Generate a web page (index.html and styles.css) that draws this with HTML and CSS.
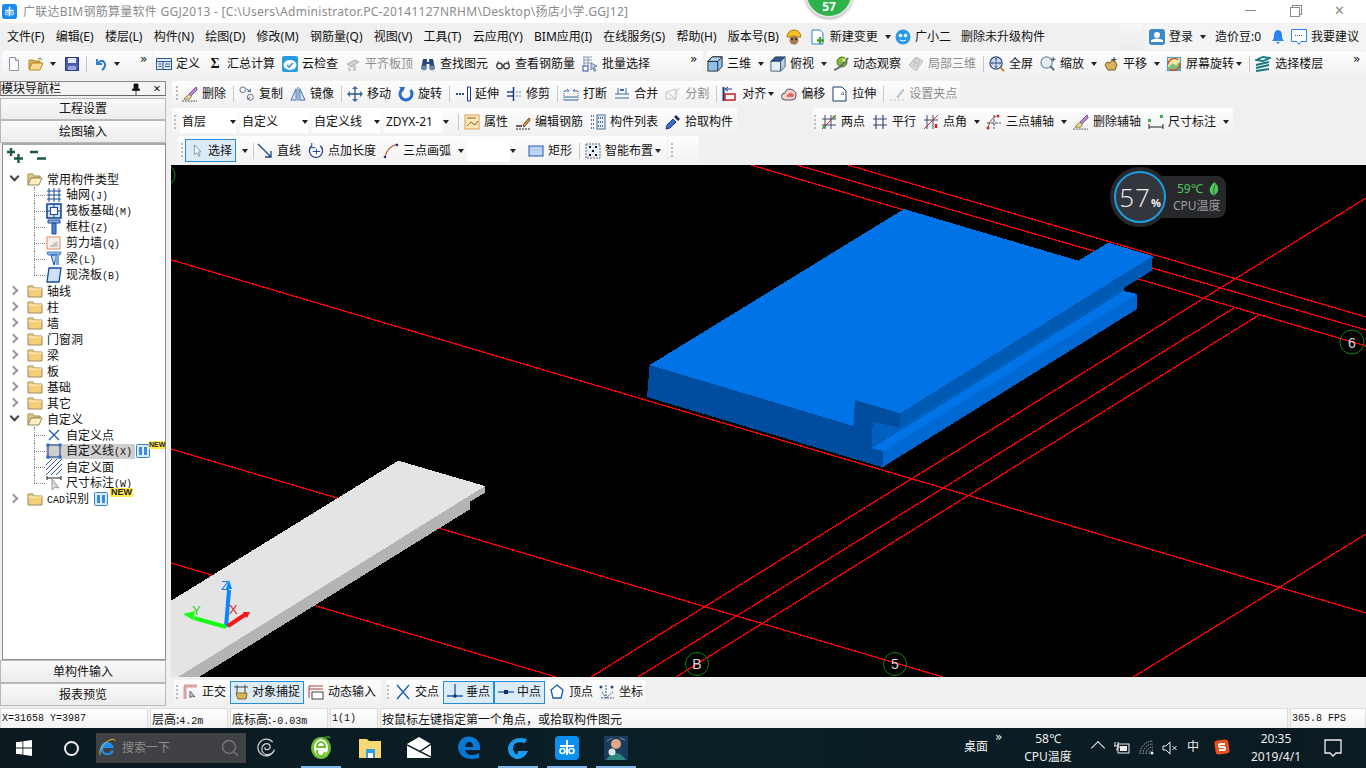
FILE: index.html
```html
<!DOCTYPE html>
<html lang="zh">
<head>
<meta charset="utf-8">
<title>广联达BIM钢筋算量软件 GGJ2013</title>
<link rel="stylesheet" href="styles.css">
</head>
<body>
<svg class="defs" xmlns="http://www.w3.org/2000/svg">
<symbol id="app" viewBox="0 0 16 16"><rect x="0" y="0" width="16" height="16" rx="3" fill="#1a8cf0"/><path d="M8 3v10M3.5 7h9" stroke="#fff" stroke-width="1.6" fill="none"/><circle cx="5" cy="10" r="1.6" fill="none" stroke="#fff"/><circle cx="11" cy="10" r="1.6" fill="none" stroke="#fff"/></symbol>
<symbol id="new" viewBox="0 0 16 16"><path d="M3.5 1.5h6l3 3v10h-9z" fill="#fdfdfd" stroke="#8a94a6"/><path d="M9.5 1.5v3h3" fill="#dfe6f0" stroke="#8a94a6"/></symbol>
<symbol id="open" viewBox="0 0 16 16"><path d="M1 4h5l1 1h5v2H4L1 13z" fill="#e0b050" stroke="#b58a30"/><path d="M4 7h11l-3 7H1z" fill="#f6d98a" stroke="#b58a30"/><path d="M10 3q3-2 4 1" stroke="#3a8a30" fill="none"/></symbol>
<symbol id="save" viewBox="0 0 16 16"><rect x="1.5" y="1.5" width="13" height="13" fill="#4a5fb4" stroke="#2c3a80"/><rect x="4" y="2" width="8" height="5" fill="#e8ecf6"/><rect x="4" y="10" width="8" height="4" fill="#9aa6d4"/></symbol>
<symbol id="undo" viewBox="0 0 16 16"><path d="M4 3v5h5" fill="none" stroke="#2a7ad0" stroke-width="1.8"/><path d="M4 8q4-5 7-2 3 4-2 8" fill="none" stroke="#2a7ad0" stroke-width="2"/></symbol>
<symbol id="def" viewBox="0 0 16 16"><rect x="0.5" y="2.5" width="15" height="11" fill="#dfe9f5" stroke="#2a5a90"/><path d="M1 5.5h14M7 5.5v8M9 8h5M9 10.5h5M2.5 8h3M2.5 10.5h3" stroke="#2a5a90" fill="none"/></symbol>
<symbol id="cloud" viewBox="0 0 16 16"><rect x="0" y="0" width="16" height="16" rx="2" fill="#2a9be0"/><ellipse cx="8" cy="9" rx="6.5" ry="5" fill="#fff"/><path d="M5 9l2 2 4-4" stroke="#2a9be0" stroke-width="1.6" fill="none"/></symbol>
<symbol id="flat" viewBox="0 0 16 16"><path d="M2 8l8-4 4 2-8 5z" fill="#d0d0d0" stroke="#b0b0b0"/><path d="M3 11l3 2v2H3zM8 10h3v5H8z" fill="#c8c8c8"/></symbol>
<symbol id="binoc" viewBox="0 0 16 16"><path d="M3 3h4v3h2V3h4l2 10H9.5V8h-3v5H1z" fill="#2a4a78"/><circle cx="4" cy="12" r="2.5" fill="#6a8ab0"/><circle cx="12" cy="12" r="2.5" fill="#6a8ab0"/></symbol>
<symbol id="glasses" viewBox="0 0 16 16"><circle cx="4.5" cy="10" r="2.8" fill="#fff" stroke="#444" stroke-width="1.4"/><circle cx="11.5" cy="10" r="2.8" fill="#fff" stroke="#444" stroke-width="1.4"/><path d="M7 10h2M2 8l2-3M14 8l-1-3" stroke="#444" fill="none"/></symbol>
<symbol id="batch" viewBox="0 0 16 16"><path d="M1 1h9M1 4h9M1 7h9M2 1v9M6 1v9" stroke="#8a9ab0" fill="none"/><rect x="1" y="10" width="5" height="5" fill="#fff" stroke="#2a4ab0"/><path d="M9 7l6 3-3 1 2 4-2 0-1-3-2 2z" fill="#bcd" stroke="#68a"/></symbol>
<symbol id="cube" viewBox="0 0 18 18"><path d="M1 6l5-5h11v11l-5 5H1z" fill="#8cc0ec" stroke="#222"/><path d="M1 6h11v11M12 6l5-5" fill="none" stroke="#222"/><path d="M1 6l5-5h11l-5 5z" fill="#b5d8f5" stroke="#222"/></symbol>
<symbol id="top" viewBox="0 0 18 18"><path d="M1 6l5-5h11l-5 5z" fill="#2a5a90" stroke="#234"/><path d="M1 6h11v11H1z" fill="#e4eef8" stroke="#456"/><path d="M12 6l5-5v11l-5 5z" fill="#bcd3ec" stroke="#456"/></symbol>
<symbol id="orbit" viewBox="0 0 16 16"><circle cx="9" cy="6" r="5" fill="#8ab83a" stroke="#4a7a20"/><path d="M1 14Q8 12 15 2" stroke="#5a6a7a" stroke-width="2" fill="none"/><circle cx="11" cy="4" r="1.8" fill="#d8ee88"/></symbol>
<symbol id="lcube" viewBox="0 0 16 16"><path d="M8 1l7 4-7 10-7-6z" fill="#d8d8d8" stroke="#bdbdbd"/><path d="M4 4l7 5M8 1l-2 10M12 3l-3 9" stroke="#c0c0c0" fill="none"/></symbol>
<symbol id="full" viewBox="0 0 17 17"><circle cx="7.5" cy="7.5" r="6.5" fill="#d8e4f2" stroke="#2a4a70" stroke-width="1.3"/><path d="M7.5 3v9M3 7.5h9" stroke="#2a4a90"/><path d="M6 4l1.5-1.5L9 4M6 11l1.5 1.5L9 11M4 6L2.5 7.5 4 9M11 6l1.5 1.5L11 9" stroke="#2a4a90" fill="none"/><path d="M12 12l4 4" stroke="#c08020" stroke-width="2"/></symbol>
<symbol id="zoom" viewBox="0 0 17 17"><circle cx="7" cy="7" r="6" fill="#e4ecf6" stroke="#7a8a9a" stroke-width="1.3"/><path d="M11 11l4 4" stroke="#4a6a8a" stroke-width="2.2"/><path d="M14 1v5M11.5 3.5h5" stroke="#2a4a4a"/></symbol>
<symbol id="pan" viewBox="0 0 16 16"><path d="M2 9l2-3 3 1 2-3 3 1 2 4-2 5H5z" fill="#d8b460" stroke="#7a5a20"/><path d="M11 1v5M8.5 3.5h5" stroke="#345"/></symbol>
<symbol id="screen" viewBox="0 0 17 17"><rect x="1.5" y="1.5" width="14" height="14" fill="#f4e8a0" stroke="#3a9ac8"/><path d="M2 12l5-4 4 2 4-5v10H2z" fill="#7ac078"/><path d="M2 9a7 7 0 0 1 11-5M15 8a7 7 0 0 1-11 6" stroke="#d83020" stroke-width="1.3" fill="none"/></symbol>
<symbol id="floors" viewBox="0 0 16 16"><path d="M1 4l7-3 7 1-7 3zM1 9l13-3M1 12l13-3M1 15l13-2" stroke="#1a7a80" stroke-width="1.8" fill="none"/></symbol>
<symbol id="del" viewBox="0 0 17 17"><path d="M15 1L7 9l2 2 7-7z" fill="#c08ad0" stroke="#6a4a8a"/><path d="M7 9L2 14h6l2-3z" fill="#f0d8a0" stroke="#8a7a40"/><path d="M0 16h16" stroke="#444" stroke-dasharray="2 1"/></symbol>
<symbol id="copy" viewBox="0 0 17 17"><circle cx="4" cy="4" r="3" fill="none" stroke="#667"/><circle cx="12" cy="12" r="3.2" fill="none" stroke="#667"/><path d="M12 12l-3 2M8 3l4 3M12 3v3H9" stroke="#2a5a90" fill="none"/></symbol>
<symbol id="mirror" viewBox="0 0 17 17"><path d="M8.5 1v15" stroke="#3a6ab0"/><path d="M6.5 3v12H1zM10.5 3v12H16z" fill="#d8e6f6" stroke="#3a6ab0"/></symbol>
<symbol id="move" viewBox="0 0 16 16"><path d="M8 1v14M1 8h14" stroke="#2a5a8a" stroke-width="1.3"/><path d="M8 0l3 3H5zM8 16l3-3H5zM0 8l3-3v6zM16 8l-3-3v6z" fill="#3a6aa0"/></symbol>
<symbol id="rot" viewBox="0 0 16 16"><path d="M12.5 4A6 6 0 1 1 4 3.5" fill="none" stroke="#2a6ac8" stroke-width="3"/><path d="M1 1l6 0-2 5z" fill="#2a6ac8"/></symbol>
<symbol id="ext" viewBox="0 0 16 16"><path d="M1 8h9" stroke="#2a4a8a" stroke-width="2" stroke-dasharray="2 1"/><path d="M12.5 1h3v14h-3z" fill="#fff" stroke="#1a3a8a"/></symbol>
<symbol id="trim" viewBox="0 0 16 16"><path d="M1 6h6M1 10h6" stroke="#2a4a8a" stroke-width="1.5"/><path d="M7.5 1v14" stroke="#1a3a6a" stroke-width="1.5"/><path d="M10 6h5M10 10h5" stroke="#8aa8d0" stroke-width="1.5" stroke-dasharray="2 1"/></symbol>
<symbol id="brk" viewBox="0 0 16 16"><path d="M1 5h5L4 3M15 5h-5l2-2M1 11h14M1 14h14" stroke="#3a6aa8" fill="none"/><path d="M1 5v9M15 5v9" stroke="#3a6aa8" stroke-dasharray="1 1"/></symbol>
<symbol id="mrg" viewBox="0 0 16 16"><path d="M4 2v6M12 2v6M1 8h14M1 12h14" stroke="#3a6aa8" fill="none"/><path d="M6 4h4" stroke="#3a6aa8" stroke-width="2"/></symbol>
<symbol id="split" viewBox="0 0 16 16"><path d="M1 13V6l10-3v10zM1 6l10 7M14 2l-4 6" stroke="#c4c4c4" fill="none"/></symbol>
<symbol id="alg" viewBox="0 0 16 16"><path d="M1.5 1v14" stroke="#1a3a8a" stroke-width="2"/><path d="M3 3h7M6 1L3 3l3 2" stroke="#1a3a8a" fill="none"/><rect x="3" y="8" width="10" height="6" fill="#fff" stroke="#c02020" stroke-width="1.5"/></symbol>
<symbol id="off" viewBox="0 0 16 16"><path d="M4 14a3 3 0 0 1 0-7q1-6 8-3 4 2 3 6 0 4-4 4z" fill="#f0d0d0" stroke="#555"/><path d="M6 11q-1-3 2-3 1-3 4 0 2 1 0 3z" fill="#e06a5a"/></symbol>
<symbol id="str" viewBox="0 0 16 16"><path d="M1 1h9l4 4v10H1z" fill="#fff" stroke="#1a3a6a"/><path d="M9 8h4M11 6v4" stroke="#1a3a6a" stroke-dasharray="1 1"/></symbol>
<symbol id="grip2" viewBox="0 0 16 16"><path d="M8 11l6-8 1 1-6 8z" fill="#ddd" stroke="#bbb"/><path d="M1 14h14" stroke="#bbb" stroke-dasharray="2 2"/></symbol>
<symbol id="prop" viewBox="0 0 16 16"><rect x="1" y="1" width="14" height="14" fill="#fde6b8" stroke="#d8a050"/><path d="M3 4h9M3 12l4-4 4 3 3-4" stroke="#8a6020" fill="none"/></symbol>
<symbol id="edit" viewBox="0 0 16 16"><path d="M1 12h6" stroke="#222" stroke-width="1.4"/><path d="M8 11L14 4l1 2-6 7z" fill="#d8a040" stroke="#6a4a10"/><path d="M1 15h14" stroke="#222" stroke-dasharray="2 1"/></symbol>
<symbol id="list" viewBox="0 0 16 16"><rect x="7" y="1" width="8" height="14" fill="#e4eef8" stroke="#4a6a90"/><path d="M8 4h6M8 8h6M8 12h6M1 2h3M1 6h3M1 10h3M1 14h3" stroke="#2a4a70" stroke-dasharray="1 1" stroke-width="1.4"/></symbol>
<symbol id="pick" viewBox="0 0 16 16"><path d="M1 15l1-4 6-6 3 3-6 6z" fill="#3a6ad0" stroke="#1a3a80"/><path d="M9 3l2-2 4 4-2 2z" fill="#1a2a50"/></symbol>
<symbol id="two" viewBox="0 0 16 16"><path d="M4 1v14M10 1v14M1 5h14M1 11h14" stroke="#3a4a7a" fill="none"/><path d="M1 15L15 1" stroke="#d02020"/><circle cx="3" cy="13" r="1.5" fill="#3a9a30"/><circle cx="13" cy="3" r="1.5" fill="#3a9a30"/></symbol>
<symbol id="par" viewBox="0 0 16 16"><path d="M4 1v14M11 1v14M1 5h14M1 11h14" stroke="#3a4a7a" fill="none" stroke-width="1.2"/></symbol>
<symbol id="ang" viewBox="0 0 16 16"><path d="M4 1v14M10 1v14M1 6h14" stroke="#3a4a7a" fill="none"/><path d="M1 15L15 1" stroke="#d02020"/><path d="M13 10v4" stroke="#d02020" stroke-width="2.5"/></symbol>
<symbol id="arc3" viewBox="0 0 16 16"><path d="M2 15Q3 6 10 2" stroke="#c03020" fill="none"/><path d="M8 1v14M1 9h14" stroke="#3a4a7a" fill="none" stroke-dasharray="3 1"/><circle cx="2" cy="14" r="1.5" fill="#c03020"/><circle cx="12" cy="2" r="1.5" fill="#c03020"/></symbol>
<symbol id="dim" viewBox="0 0 16 16"><rect x="0" y="5" width="3" height="3" fill="#3ab04a"/><rect x="12" y="1" width="3" height="3" fill="#3ab04a"/><path d="M1 10v5M15 10v5M1 13h14" stroke="#222"/></symbol>
<symbol id="cur" viewBox="0 0 16 16"><path d="M5 1v11l3-2 2 4 1.5-1-2-4h3z" fill="#fff" stroke="#7a8aa0"/></symbol>
<symbol id="line" viewBox="0 0 16 16"><path d="M1 1l13 13M8 14h6V8" stroke="#1a4a7a" stroke-width="1.3" fill="none"/></symbol>
<symbol id="plen" viewBox="0 0 17 17"><path d="M4 3A7 7 0 1 0 13 3" fill="#fff" stroke="#1a3a8a" stroke-width="1.3"/><path d="M4 0v5h4M5 9h8M9 6v6" stroke="#1a3a8a" fill="none"/></symbol>
<symbol id="arc" viewBox="0 0 16 16"><path d="M2 15Q3 5 14 1" stroke="#c04030" stroke-width="1.2" fill="none"/><circle cx="2" cy="14" r="1.3" fill="#1a3a8a"/><circle cx="14" cy="2" r="1.3" fill="#1a3a8a"/></symbol>
<symbol id="rect" viewBox="0 0 16 16"><rect x="1" y="3" width="14" height="10" fill="#bcd2f4" stroke="#2a5ab0"/></symbol>
<symbol id="smart" viewBox="0 0 16 16"><rect x="1" y="1" width="14" height="14" fill="#e8eef6" stroke="#667" stroke-dasharray="2 1"/><path d="M4 4l2 0M10 4h2M4 12h2M10 12h2M8 7v2" stroke="#111" stroke-width="2"/></symbol>
<symbol id="ortho" viewBox="0 0 16 16"><path d="M2 2h13M3 2v13" stroke="#d8a0a0" stroke-width="3" fill="none"/><path d="M8 7v7l2-2 3 1z" fill="#ccd" stroke="#667"/></symbol>
<symbol id="snap" viewBox="0 0 16 16"><path d="M4 1v9M12 1v9M1 3h14" stroke="#444"/><path d="M3 9h11l-1 6H5z" fill="#d8b460" stroke="#8a6a20"/></symbol>
<symbol id="dyn" viewBox="0 0 16 16"><path d="M1 2h14M1 5h14M1 2v12" stroke="#b04040" fill="none"/><rect x="4" y="8" width="11" height="7" fill="#fff" stroke="#444"/></symbol>
<symbol id="cross" viewBox="0 0 16 16"><path d="M2 1l12 14M14 1L2 15" stroke="#1a5ab0" stroke-width="1.3"/></symbol>
<symbol id="perp" viewBox="0 0 16 16"><path d="M8 0v12M0 12h16" stroke="#1a5ab0" stroke-width="1.3"/><circle cx="8" cy="12" r="1.8" fill="#12306a"/></symbol>
<symbol id="mid" viewBox="0 0 16 16"><path d="M0 8h16" stroke="#1a5ab0" stroke-width="1.3"/><rect x="6" y="6" width="4" height="4" fill="#12306a"/></symbol>
<symbol id="vert" viewBox="0 0 16 16"><path d="M8 1l6 5-2 8H4L2 6z" fill="#fff" stroke="#1a5ab0" stroke-width="1.3"/></symbol>
<symbol id="coord" viewBox="0 0 16 16"><path d="M7 1v13M2 14h13M3 8l4 6 7-6" stroke="#2a4a8a" fill="none" stroke-dasharray="2 1"/><circle cx="13" cy="3" r="1.5" fill="#2a4a8a"/><circle cx="2" cy="3" r="1.5" fill="#2a4a8a"/></symbol>
<symbol id="plus" viewBox="0 0 16 16"><path d="M4 0v8M0 4h8M11.5 6v9M7 10.5h9" stroke="#1a5a4a" stroke-width="2.4"/></symbol>
<symbol id="minus" viewBox="0 0 16 16"><path d="M0 4h8M7 10.5h9" stroke="#1a5a4a" stroke-width="2.4"/></symbol>
<symbol id="pinp" viewBox="0 0 10 12"><path d="M3 1h4v5h1.500v1.500h-7V6H3zM5 7.500V12" fill="#111" stroke="#111" stroke-width=".8"/></symbol>
<symbol id="fold" viewBox="0 0 16 16"><path d="M1 3h5l1 2h8v9H1z" fill="#f4cf78" stroke="#9a8a60"/><path d="M1 6h14" stroke="#fff2c4"/></symbol>
<symbol id="foldo" viewBox="0 0 16 16"><path d="M1 3h5l1 2h6v2H4l-3 7z" fill="#e8c878" stroke="#9a8a60"/><path d="M4 7h11l-3 7H1z" fill="#fbeec0" stroke="#9a8a60"/></symbol>
<symbol id="tgrid" viewBox="0 0 16 16"><path d="M3 1v14M8 1v14M13 1v14M1 4h14M1 8h14M1 12h14" stroke="#1a4a9a"/></symbol>
<symbol id="traft" viewBox="0 0 16 16"><rect x="1" y="1" width="14" height="14" fill="#cfe0f4" stroke="#1a4a9a" stroke-width="1.6"/><rect x="4.5" y="4.5" width="7" height="7" fill="#fff" stroke="#1a4a9a"/><path d="M1 8h3M12 8h3M8 1v3M8 12v3" stroke="#1a4a9a"/></symbol>
<symbol id="tcol" viewBox="0 0 16 16"><path d="M2 1h12v3H2z" fill="#8ab4e4" stroke="#1a4a9a"/><path d="M6 4h4v11H6z" fill="#4a84d0" stroke="#1a4a9a"/></symbol>
<symbol id="twall" viewBox="0 0 16 16"><rect x="1" y="2" width="13" height="12" fill="#f4f0ea" stroke="#d89060"/><path d="M3 12l8-6 1 6z" fill="#c4c4c4"/></symbol>
<symbol id="tbeam" viewBox="0 0 16 16"><path d="M1 1h14l-1 3H2z" fill="#8ab4e4" stroke="#4a84d0"/><path d="M5 4h6l-3 10z" fill="#c4d8f0" stroke="#1a4a9a"/><path d="M9 5l4-2v11h-3z" fill="#7aa8e0"/></symbol>
<symbol id="tslab" viewBox="0 0 16 16"><path d="M3 1h12l-2 14H1z" fill="#cfe0f8" stroke="#1a4a9a" stroke-width="1.3"/></symbol>
<symbol id="tpt" viewBox="0 0 16 16"><path d="M3 3l10 10M13 3L3 13" stroke="#1a5ab0" stroke-width="1.3"/></symbol>
<symbol id="tline" viewBox="0 0 16 16"><rect x="2" y="2" width="12" height="12" fill="none" stroke="#1a3a7a"/><rect x="0.5" y="0.5" width="3" height="3" fill="#2a6ad0"/><rect x="12.5" y="0.5" width="3" height="3" fill="#2a6ad0"/><rect x="0.5" y="12.5" width="3" height="3" fill="#2a6ad0"/><rect x="12.5" y="12.5" width="3" height="3" fill="#2a6ad0"/></symbol>
<symbol id="thatch" viewBox="0 0 16 16"><path d="M0 6L6 0M0 11L11 0M0 16L16 0M5 16L16 5M10 16l6-6" stroke="#2a5ab0"/></symbol>
<symbol id="tdim" viewBox="0 0 16 16"><path d="M1 1v4M15 1v4M1 3h14" stroke="#222"/><path d="M6 4v11l3-3 4 1z" fill="#ddd" stroke="#999"/></symbol>
<symbol id="book" viewBox="0 0 14 14"><rect x="0.5" y="0.5" width="13" height="13" rx="1" fill="#d8ecff" stroke="#3a84c8"/><path d="M3 3h3v8H3zM8 3h3v8H8z" fill="#3a8ae0"/></symbol>
<symbol id="win" viewBox="0 0 16 16"><path d="M0 2.3l6.5-.9v6.2H0zM7.3 1.3L16 0v7.6H7.3zM0 8.4h6.5v6.2L0 13.7zM7.3 8.4H16V16l-8.7-1.2z" fill="#fff"/></symbol>
<symbol id="ie" viewBox="0 0 24 24"><path d="M4 13a8 8 0 0 1 16-1H8a4.5 4.5 0 0 0 9 3h3.5A8.5 8.5 0 0 1 4 13z" fill="#1c8ff0"/><path d="M4 20Q1 15 10 6q8-7 12-3" fill="none" stroke="#f0c020" stroke-width="1.2"/></symbol>
<symbol id="mag" viewBox="0 0 18 18"><circle cx="8" cy="8" r="6.5" fill="none" stroke="#777" stroke-width="1.4"/><path d="M13 13l4 4" stroke="#777" stroke-width="1.4"/></symbol>
<symbol id="swirl" viewBox="0 0 24 24"><path d="M20 5A10 10 0 1 0 22 14Q20 20 12 20a7 7 0 0 1-1-13q5-1 6 3 0 4-4 4-3 0-2-3" fill="none" stroke="#ccc" stroke-width="1.5"/></symbol>
<symbol id="gie" viewBox="0 0 24 24"><ellipse cx="12" cy="12" rx="10" ry="11" fill="#6cc030"/><ellipse cx="12" cy="12" rx="7" ry="9" fill="#fff"/><path d="M8 11h8a4 5 0 0 0-8 0zM8 14a4 5 0 0 0 8 2" fill="none" stroke="#6cc030" stroke-width="2.2"/><path d="M15 2q5-2 6 0" stroke="#3a9a20" fill="none" stroke-width="1.5"/></symbol>
<symbol id="tfold" viewBox="0 0 24 24"><path d="M1 3h8l2 2h12v17H1z" fill="#f8d775"/><rect x="8" y="13" width="9" height="9" fill="#2a9ee8"/><rect x="10" y="17" width="5" height="5" fill="#fff"/></symbol>
<symbol id="mail" viewBox="0 0 24 24"><path d="M0 8l12-7 12 7v14H0z" fill="#fff"/><path d="M0 9l24 12M24 8L12 16" stroke="#0a1a20" stroke-width="1.5" fill="none"/></symbol>
<symbol id="edge" viewBox="0 0 24 24"><path d="M1 12A11 11 0 0 1 23 11v3H8q1 5 7 5 4 0 7-2v5q-4 1-8 1Q3 23 1 12zm7-1h8q0-5-4-5-3 0-4 5z" fill="#0a78d8"/></symbol>
<symbol id="gapp" viewBox="0 0 24 24"><path d="M21 3Q6-1 2 11q-1 9 8 12 8 1 12-8H12l-1 4q6 1 5-1-7 3-9-5 0-9 12-6z" fill="#1a9af0"/></symbol>
<symbol id="bapp" viewBox="0 0 24 24"><rect width="24" height="24" rx="4" fill="#0a90f0"/><path d="M12 4v15M5 10h14" stroke="#fff" stroke-width="2" fill="none"/><circle cx="7.5" cy="15" r="2.5" fill="none" stroke="#fff" stroke-width="1.6"/><circle cx="16.5" cy="15" r="2.5" fill="none" stroke="#fff" stroke-width="1.6"/></symbol>
<symbol id="wiz" viewBox="0 0 24 24"><rect width="24" height="24" fill="#1c3c5c"/><circle cx="12" cy="8" r="5" fill="#e0a888"/><path d="M2 24q10-14 20 0z" fill="#2a8a80"/><circle cx="8" cy="16" r="3.5" fill="#dce4ec"/><path d="M3 5l5-3M21 4l-5-2" stroke="#88a"/></symbol>
<symbol id="bat" viewBox="0 0 16 16"><rect x="4" y="4" width="11" height="9" fill="none" stroke="#eee"/><rect x="6" y="6" width="7" height="5" fill="#eee"/><path d="M1 2v4M4 2v4M0 6h5v2H3v3" stroke="#eee" fill="none"/></symbol>
<symbol id="wifi" viewBox="0 0 16 16"><path d="M1 14A13 13 0 0 1 14 1M4 14A10 10 0 0 1 14 4M7 14a7 7 0 0 1 7-7M10 14a4 4 0 0 1 4-4" fill="none" stroke="#bbb" stroke-dasharray="1.5 1"/><circle cx="13" cy="13" r="1.5" fill="#eee"/></symbol>
<symbol id="spk" viewBox="0 0 16 16"><path d="M1 6h3l4-4v12l-4-4H1z" fill="none" stroke="#eee"/><path d="M10.5 6l4 4M14.5 6l-4 4" stroke="#eee"/></symbol>
<symbol id="sogou" viewBox="0 0 16 16"><rect x="1" y="1" width="14" height="14" rx="3" fill="#e8501c" transform="rotate(-8 8 8)"/><path d="M11 5H6.5Q5 5 5 6.5T6.5 8h3q1.5 0 1.5 1.5T9.5 11H5" stroke="#fff" stroke-width="2" fill="none"/></symbol>
<symbol id="notif" viewBox="0 0 18 18"><path d="M1 1h16v13h-5l-3 3-3-3H1z" fill="none" stroke="#eee" stroke-width="1.3"/></symbol>
<symbol id="user" viewBox="0 0 16 16"><rect width="16" height="16" rx="3" fill="#3a8ac8"/><circle cx="8" cy="6" r="3" fill="#fff"/><path d="M2 13h12V11Q8 8 2 11z" fill="#fff"/></symbol>
<symbol id="bell" viewBox="0 0 16 16"><path d="M8 1q4 0 4 6 0 3 2 5H2q2-2 2-5 0-6 4-6z" fill="#2a84f0"/><path d="M6 13h4l-2 2z" fill="#2a84f0"/></symbol>
<symbol id="chat" viewBox="0 0 16 16"><path d="M.5.5h15v12H10l-2 3-2-3H.5z" fill="#fff" stroke="#2a84f0"/><path d="M4 6.5h8" stroke="#2a4a90" stroke-dasharray="1 1"/></symbol>
<symbol id="hat" viewBox="0 0 16 16"><path d="M1 8a7 7 0 0 1 14 0z" fill="#f4c020" stroke="#a87a10"/><circle cx="8" cy="11" r="4.5" fill="#a87850"/><circle cx="6" cy="10" r="1" fill="#222"/><circle cx="10" cy="10" r="1" fill="#222"/></symbol>
<symbol id="doc" viewBox="0 0 16 16"><path d="M2 1h8l3 3v11H2z" fill="#fff" stroke="#2a84d0"/><path d="M10 8v7M7 11.5h7" stroke="#4aa030" stroke-width="2.4"/></symbol>
<symbol id="face" viewBox="0 0 16 16"><circle cx="8" cy="8" r="7.5" fill="#2a9ae8"/><circle cx="5.5" cy="6.5" r="1.8" fill="#fff"/><circle cx="10.5" cy="6.5" r="1.8" fill="#fff"/><path d="M5 11q3 2 6 0" stroke="#fff" fill="none"/></symbol>
<symbol id="leaf" viewBox="0 0 12 16"><path d="M7 0q6 6 3 12-2 3-4 4-6-2-5-8 1-5 6-8z" fill="#4fc85a"/><path d="M6 16Q5 8 7 3" stroke="#26282c" fill="none" stroke-width=".8"/></symbol>
</svg>

<header class="title">
  <svg class="i title-icon"><use href="#app"/></svg>
  <span class="title-text">广联达BIM钢筋算量软件 GGJ2013 - [C:\Users\Administrator.PC-20141127NRHM\Desktop\扬店小学.GGJ12]</span>
  <span class="winbtn min"></span><span class="winbtn max"></span><span class="winbtn close">✕</span>
  <div class="badge"><span>57</span></div>
</header>

<nav class="menu">
  <span class="m">文件(F)</span><span class="m">编辑(E)</span><span class="m">楼层(L)</span><span class="m">构件(N)</span><span class="m">绘图(D)</span><span class="m">修改(M)</span><span class="m">钢筋量(Q)</span><span class="m">视图(V)</span><span class="m">工具(T)</span><span class="m">云应用(Y)</span><span class="m">BIM应用(I)</span><span class="m">在线服务(S)</span><span class="m">帮助(H)</span><span class="m m-last">版本号(B)</span>
  <svg class="i"><use href="#hat"/></svg>
  <span class="it it-change"><svg class="i"><use href="#doc"/></svg>新建变更<b class="ar"></b></span>
  <span class="it"><svg class="i"><use href="#face"/></svg>广小二</span>
  <span class="m">删除未升级构件</span>
  <span class="menu-slot"></span>
  <div class="account">
    <span class="it"><svg class="i"><use href="#user"/></svg>登录<b class="ar"></b></span>
    <span>造价豆:0</span>
    <svg class="i acc-bell"><use href="#bell"/></svg>
    <span class="it"><svg class="i"><use href="#chat"/></svg>我要建议</span>
  </div>
</nav>

<div class="row1">
  <div class="band b-file">
    <svg class="i"><use href="#new"/></svg>
    <span class="it"><svg class="i"><use href="#open"/></svg><b class="ar tight"></b></span>
    <svg class="i"><use href="#save"/></svg>
    <i class="sep"></i>
    <span class="it"><svg class="i"><use href="#undo"/></svg><b class="ar"></b></span>
    <span class="more">»</span>
  </div>
  <div class="band b-main">
    <span class="it"><svg class="i"><use href="#def"/></svg>定义</span>
    <span class="it"><span class="i sigma">Σ</span>汇总计算</span>
    <span class="it"><svg class="i"><use href="#cloud"/></svg>云检查</span>
    <span class="it off"><svg class="i"><use href="#flat"/></svg>平齐板顶</span>
    <span class="it"><svg class="i"><use href="#binoc"/></svg>查找图元</span>
    <span class="it"><svg class="i"><use href="#glasses"/></svg>查看钢筋量</span>
    <span class="it"><svg class="i"><use href="#batch"/></svg>批量选择</span>
    <span class="more">»</span>
  </div>
  <div class="band b-view">
    <span class="it"><svg class="i"><use href="#cube"/></svg>三维<b class="ar"></b></span>
    <span class="it"><svg class="i"><use href="#top"/></svg>俯视<b class="ar"></b></span>
    <span class="it"><svg class="i"><use href="#orbit"/></svg>动态观察</span>
    <span class="it off"><svg class="i"><use href="#lcube"/></svg>局部三维</span>
    <i class="sep"></i>
    <span class="it"><svg class="i"><use href="#full"/></svg>全屏</span>
    <span class="it"><svg class="i"><use href="#zoom"/></svg>缩放<b class="ar"></b></span>
    <span class="it"><svg class="i"><use href="#pan"/></svg>平移<b class="ar"></b></span>
    <span class="it"><svg class="i"><use href="#screen"/></svg>屏幕旋转<b class="ar tight"></b></span>
    <i class="sep"></i>
    <span class="it"><svg class="i"><use href="#floors"/></svg>选择楼层</span>
    <span class="more">»</span>
  </div>
</div>

<main class="main">
  <aside class="side">
    <div class="side-head"><span>模块导航栏</span><svg class="pin"><use href="#pinp"/></svg><span class="pinx">×</span></div>
    <button class="navbtn first">工程设置</button>
    <button class="navbtn">绘图输入</button>
    <div class="tree-wrap">
      <div class="tree-tools"><svg class="i"><use href="#plus"/></svg><svg class="i"><use href="#minus"/></svg></div>
      <ul class="tree">
        <li class="n"><i class="chev down"></i><svg class="i"><use href="#foldo"/></svg><span class="lb">常用构件类型</span></li>
        <li class="c v"><svg class="i"><use href="#tgrid"/></svg><span class="lb">轴网<span class="lat">(J)</span></span></li>
        <li class="c v"><svg class="i"><use href="#traft"/></svg><span class="lb">筏板基础<span class="lat">(M)</span></span></li>
        <li class="c v"><svg class="i"><use href="#tcol"/></svg><span class="lb">框柱<span class="lat">(Z)</span></span></li>
        <li class="c v"><svg class="i"><use href="#twall"/></svg><span class="lb">剪力墙<span class="lat">(Q)</span></span></li>
        <li class="c v"><svg class="i"><use href="#tbeam"/></svg><span class="lb">梁<span class="lat">(L)</span></span></li>
        <li class="c e"><svg class="i"><use href="#tslab"/></svg><span class="lb">现浇板<span class="lat">(B)</span></span></li>
        <li class="n"><i class="chev"></i><svg class="i"><use href="#fold"/></svg><span class="lb">轴线</span></li>
        <li class="n"><i class="chev"></i><svg class="i"><use href="#fold"/></svg><span class="lb">柱</span></li>
        <li class="n"><i class="chev"></i><svg class="i"><use href="#fold"/></svg><span class="lb">墙</span></li>
        <li class="n"><i class="chev"></i><svg class="i"><use href="#fold"/></svg><span class="lb">门窗洞</span></li>
        <li class="n"><i class="chev"></i><svg class="i"><use href="#fold"/></svg><span class="lb">梁</span></li>
        <li class="n"><i class="chev"></i><svg class="i"><use href="#fold"/></svg><span class="lb">板</span></li>
        <li class="n"><i class="chev"></i><svg class="i"><use href="#fold"/></svg><span class="lb">基础</span></li>
        <li class="n"><i class="chev"></i><svg class="i"><use href="#fold"/></svg><span class="lb">其它</span></li>
        <li class="n"><i class="chev down"></i><svg class="i"><use href="#foldo"/></svg><span class="lb">自定义</span></li>
        <li class="c v"><svg class="i"><use href="#tpt"/></svg><span class="lb">自定义点</span></li>
        <li class="c v"><span class="sel-in"><svg class="i"><use href="#tline"/></svg><span class="lb">自定义线<span class="lat">(X)</span></span></span><svg class="bk"><use href="#book"/></svg><em class="nw clip">NEW</em></li>
        <li class="c v"><svg class="i"><use href="#thatch"/></svg><span class="lb">自定义面</span></li>
        <li class="c e"><svg class="i"><use href="#tdim"/></svg><span class="lb">尺寸标注<span class="lat">(W)</span></span></li>
        <li class="n"><i class="chev"></i><svg class="i"><use href="#fold"/></svg><span class="lb"><span class="lat">CAD</span>识别</span><svg class="bk bk2"><use href="#book"/></svg><em class="nw">NEW</em></li>
      </ul>
    </div>
    <button class="navbtn">单构件输入</button>
    <button class="navbtn">报表预览</button>
  </aside>

  <section class="work">
    <div class="tb tb-a">
      <div class="band b-edit">
        <i class="grip"></i>
        <span class="it"><svg class="i"><use href="#del"/></svg>删除</span><i class="sep"></i>
        <span class="it"><svg class="i"><use href="#copy"/></svg>复制</span>
        <span class="it"><svg class="i"><use href="#mirror"/></svg>镜像</span><i class="sep"></i>
        <span class="it"><svg class="i"><use href="#move"/></svg>移动</span>
        <span class="it"><svg class="i"><use href="#rot"/></svg>旋转</span><i class="sep"></i>
        <span class="it"><svg class="i"><use href="#ext"/></svg>延伸</span>
        <span class="it"><svg class="i"><use href="#trim"/></svg>修剪</span><i class="sep"></i>
        <span class="it"><svg class="i"><use href="#brk"/></svg>打断</span>
        <span class="it"><svg class="i"><use href="#mrg"/></svg>合并</span>
        <span class="it off"><svg class="i"><use href="#split"/></svg>分割</span><i class="sep"></i>
        <span class="it"><svg class="i"><use href="#alg"/></svg>对齐<b class="ar tight"></b></span>
        <span class="it"><svg class="i"><use href="#off"/></svg>偏移</span>
        <span class="it"><svg class="i"><use href="#str"/></svg>拉伸</span><i class="sep"></i>
        <span class="it off"><svg class="i"><use href="#grip2"/></svg>设置夹点</span>
      </div>
    </div>
    <div class="tb tb-b">
      <div class="band b-combo">
        <i class="grip"></i>
        <span class="combo c56">首层<b class="ar"></b></span>
        <span class="combo c68">自定义<b class="ar"></b></span>
        <span class="combo c68">自定义线<b class="ar"></b></span>
        <span class="combo c56 over">ZDYX-21<b class="ar"></b></span>
        <i class="sep"></i>
        <span class="it"><svg class="i"><use href="#prop"/></svg>属性</span>
        <span class="it"><svg class="i"><use href="#edit"/></svg>编辑钢筋</span>
        <span class="it"><svg class="i"><use href="#list"/></svg>构件列表</span>
        <span class="it"><svg class="i"><use href="#pick"/></svg>拾取构件</span>
      </div>
      <div class="band b-axis">
        <i class="grip"></i>
        <span class="it"><svg class="i"><use href="#two"/></svg>两点</span>
        <span class="it"><svg class="i"><use href="#par"/></svg>平行</span>
        <span class="it"><svg class="i"><use href="#ang"/></svg>点角<b class="ar"></b></span>
        <span class="it"><svg class="i"><use href="#arc3"/></svg>三点辅轴<b class="ar"></b></span>
        <span class="it"><svg class="i"><use href="#del"/></svg>删除辅轴</span>
        <span class="it"><svg class="i"><use href="#dim"/></svg>尺寸标注<b class="ar"></b></span>
      </div>
    </div>
    <div class="tb tb-c">
      <div class="band b-draw">
        <i class="grip"></i>
        <span class="it on pick"><svg class="i"><use href="#cur"/></svg>选择</span><b class="ar tight"></b><i class="sep"></i>
        <span class="it"><svg class="i"><use href="#line"/></svg>直线</span>
        <span class="it"><svg class="i"><use href="#plen"/></svg>点加长度</span>
        <span class="it"><svg class="i"><use href="#arc"/></svg>三点画弧<b class="ar"></b></span>
        <span class="combo blank"><b class="ar"></b></span>
        <span class="it"><svg class="i"><use href="#rect"/></svg>矩形</span><i class="sep"></i>
        <span class="it"><svg class="i"><use href="#smart"/></svg>智能布置<b class="ar tight"></b></span>
      </div>
      <div class="band b-stub"><i class="grip"></i></div>
    </div>

    <div class="view">
      <svg class="scene" viewBox="171 165 1195 512" xmlns="http://www.w3.org/2000/svg">
        <g class="red">
          <line x1="751" y1="165" x2="1366" y2="346"/>
          <line x1="797" y1="165" x2="1366" y2="330"/>
          <line x1="848" y1="165" x2="1366" y2="317"/>
          <line x1="171" y1="259.8" x2="1366" y2="613"/>
          <line x1="171" y1="449" x2="943" y2="677"/>
          <line x1="171" y1="563" x2="556" y2="677"/>
          <line x1="591" y1="677" x2="1366" y2="198"/>
          <line x1="638" y1="677" x2="1234" y2="308"/>
          <line x1="676" y1="677" x2="1259" y2="315"/>
          <line x1="1133.3" y1="677" x2="1366" y2="534"/>
        </g>
        <g class="solid">
          <polygon fill="#e4e4e4" points="171,600.7 398.3,460.7 485,486 178,677 171,677"/>
          <polygon fill="#b4b4b4" points="485,486 485,492.7 470,501.7 470,509.3 199,677 178,677"/>
          <polygon fill="#004c9f" points="649.7,365 853.3,426 855,400 900,413.3 899.3,427.7 872.7,421.7 871.7,448.3 883.3,451 882.3,467.3 647,397"/>
          <polygon fill="#0060c0" points="899.3,427.7 1151.7,270.7 1124.3,287.3 1124.3,291 871.7,448.3 872.7,421.7"/>
          <polygon fill="#0059b3" points="900,413.3 1152.7,256 1151.7,270.7 899.3,427.7"/>
          <polygon fill="#0073e6" points="649.7,365 904,209 1078.3,260.7 1108.3,242.7 1152.7,256 900,413.3 855,400 853.3,426"/>
          <polygon fill="#0073e6" points="871.7,448.3 1124.3,291 1137.3,294 883.3,451"/>
          <polygon fill="#0068d3" points="883.3,451 1137.3,294 1136.7,309.3 882.3,467.3"/>
        </g>
        <g class="gridmark">
          <circle cx="697" cy="664" r="11.5"/><circle cx="895" cy="664" r="11.5"/><circle cx="1352" cy="342" r="12"/><circle cx="164" cy="175" r="11"/>
        </g>
        <g class="gridtext"><text x="697" y="669">B</text><text x="895" y="669">5</text><text x="1352" y="348">6</text></g>
        <g class="axes">
          <path d="M226 627L229 590" stroke="#0a84ff" stroke-width="4"/><path d="M229 580l-3 9h6z" fill="#0a84ff"/>
          <path d="M226 627L194 618" stroke="#14ff14" stroke-width="4"/><path d="M183 614l12-3-2 9z" fill="#14ff14"/>
          <path d="M228 626L246 614" stroke="#ff1414" stroke-width="4"/><path d="M250 612l-7 0 4 6z" fill="#ff1414"/>
          <text class="ax-z" x="221" y="590">Z</text><text class="ax-y" x="192" y="615">Y</text><text class="ax-x" x="229" y="614">X</text>
        </g>
      </svg>
      <div class="cpu">
        <div class="cpu-pill"><span class="temp">59℃<svg class="leaf"><use href="#leaf"/></svg></span><span class="cpu-l">CPU温度</span></div>
        <div class="cpu-ring"><span class="pct">57</span><span class="pc">%</span></div>
      </div>
    </div>

    <div class="snapbar">
      <div class="band b-snap1">
        <i class="grip"></i>
        <span class="it"><svg class="i"><use href="#ortho"/></svg>正交</span>
        <span class="it on w74"><svg class="i"><use href="#snap"/></svg>对象捕捉</span>
        <span class="it"><svg class="i"><use href="#dyn"/></svg>动态输入</span>
      </div>
      <div class="band b-snap2">
        <i class="grip"></i>
        <span class="it"><svg class="i"><use href="#cross"/></svg>交点</span>
        <span class="it on w51"><svg class="i"><use href="#perp"/></svg>垂点</span>
        <span class="it on w51 join"><svg class="i"><use href="#mid"/></svg>中点</span>
        <span class="it"><svg class="i"><use href="#vert"/></svg>顶点</span>
        <span class="it push"><svg class="i"><use href="#coord"/></svg>坐标</span>
      </div>
    </div>
  </section>
</main>

<footer class="status">
  <span class="f f1 lat">X=31658 Y=3987</span>
  <span class="f f2">层高:<span class="lat">4.2m</span></span>
  <span class="f f3">底标高:<span class="lat">-0.03m</span></span>
  <span class="f f4 lat">1(1)</span>
  <span class="f f5">按鼠标左键指定第一个角点，或拾取构件图元</span>
  <span class="f f6 lat">365.8 FPS</span>
</footer>

<div class="taskbar">
  <svg class="tw"><use href="#win"/></svg>
  <span class="cortana"></span>
  <div class="search"><svg class="ts"><use href="#ie"/></svg><span>搜索一下</span><svg class="tm"><use href="#mag"/></svg></div>
  <svg class="tk swirl"><use href="#swirl"/></svg>
  <span class="tapp act"><svg class="tk"><use href="#gie"/></svg></span>
  <span class="tapp"><svg class="tk"><use href="#tfold"/></svg></span>
  <span class="tapp"><svg class="tk"><use href="#mail"/></svg></span>
  <span class="tapp"><svg class="tk"><use href="#edge"/></svg></span>
  <span class="tapp act"><svg class="tk"><use href="#gapp"/></svg></span>
  <span class="tapp act"><svg class="tk"><use href="#bapp"/></svg></span>
  <span class="tapp act"><svg class="tk"><use href="#wiz"/></svg></span>
  <div class="tray">
    <span class="desk">桌面</span><span class="tmore">»</span>
    <span class="two-l t-cpu"><span>58℃</span><span>CPU温度</span></span>
    <span class="caret"></span>
    <svg class="i"><use href="#bat"/></svg><svg class="i"><use href="#wifi"/></svg><svg class="i"><use href="#spk"/></svg>
    <span class="ime">中</span>
    <svg class="i"><use href="#sogou"/></svg>
    <span class="two-l t-clock"><span>20:35</span><span>2019/4/1</span></span>
    <svg class="tn"><use href="#notif"/></svg>
  </div>
</div>
</body>
</html>
```

FILE: styles.css
```css
* { box-sizing: border-box; margin: 0; padding: 0; }
html, body { width: 1366px; height: 768px; overflow: hidden; }
body { background: #f0f0f0; color: #111; font: 12px/16px "Noto Sans", "Noto Sans CJK SC", sans-serif; display: flex; flex-direction: column; }
.defs { display: none; }
.i { width: 16px; height: 16px; flex: none; display: block; }
b, em, i { font-style: normal; font-weight: normal; }

/* title */
.title { position: relative; height: 23px; background: #fff; display: flex; align-items: center; padding-left: 2px; flex: none; }
.title-icon { width: 15px; height: 15px; }
.title-text { margin-left: 6px; color: #8b8b8b; white-space: nowrap; letter-spacing: .28px; }
.winbtn { position: absolute; top: 0; height: 23px; width: 12px; }
.winbtn.min { left: 1245px; }
.winbtn.min::after { content: ""; position: absolute; left: 0; top: 10px; width: 11px; height: 1px; background: #8a8a8a; }
.winbtn.max { left: 1290px; }
.winbtn.max::before { content: ""; position: absolute; left: 2px; top: 5px; width: 8px; height: 8px; border: 1px solid #8a8a8a; }
.winbtn.max::after { content: ""; position: absolute; left: 0; top: 7px; width: 8px; height: 8px; border: 1px solid #8a8a8a; background: #fff; }
.winbtn.close { left: 1334px; color: #8a8a8a; font: 13px/21px "DejaVu Sans", sans-serif; }
.badge { position: absolute; left: 805px; top: -30px; width: 48px; height: 48px; border-radius: 50%; background: #2db34a; border: 2px solid #e2e2e2; box-shadow: 0 1px 3px rgba(0,0,0,.35); color: #fff; font-weight: 700; font-size: 12px; text-align: center; line-height: 16px; z-index: 5; }
.badge span { position: absolute; left: 0; right: 0; top: 27px; }

/* menu */
.menu { height: 28px; flex: none; display: flex; align-items: center; padding-left: 7px; white-space: nowrap; }
.m { margin-right: 11.3px; }
.m-last { margin-right: 7px; }
.menu > .i { margin-right: 8px; }
.menu .it { margin-right: 10px; }
.menu .it-change { margin-right: 5px; }
.menu-slot { position: absolute; left: 1120px; top: 24px; width: 23px; height: 26px; background: linear-gradient(#f6f6f6, #ececec); }
.account { position: absolute; left: 1146px; top: 24px; width: 220px; height: 26px; display: flex; align-items: center; gap: 10px; padding-left: 3px; background: #f4f4f4; }
.account .it { margin: 0; }
.acc-bell { margin: 0 -5px 0 -1px; }

/* tools */
.it { display: inline-flex; align-items: center; gap: 4px; white-space: nowrap; flex: none; }
.it.off { color: #8e8e8e; }
.it.on { background: #dcebf8; border: 1px solid #2a8ad4; }
.band { display: flex; align-items: center; gap: 7px; white-space: nowrap; background: linear-gradient(#fdfdfd, #f1f1f1); border-radius: 2px; flex: none; }
.sep { width: 1px; height: 16px; background: #c8c8c8; flex: none; margin-right: -2px; }
.grip { width: 2px; height: 15px; flex: none; background: repeating-linear-gradient(#bbb 0 2px, transparent 2px 4px); }
.ar { display: inline-block; width: 12px; height: 4px; flex: none; margin-right: -4px; position: relative; }
.ar::after { content: ""; position: absolute; left: 3px; top: 0; border: 3.5px solid transparent; border-top: 4px solid #222; border-bottom: 0; }
.ar.tight { width: 8px; margin-right: 0; margin-left: -4px; }
.ar.tight::after { left: 2px; }
.more { font: 12px/12px "DejaVu Sans", sans-serif; align-self: flex-start; margin-top: 3px; }

.row1 { height: 30px; flex: none; display: flex; gap: 1px; padding: 0 0 0 2px; }
.row1 .band { height: 26px; }
.b-file { width: 150px; padding-left: 4px; gap: 6px; position: relative; }
.b-file .ar.tight { margin-left: 0; margin-right: 2px; }
.b-file .ar { margin-left: -2px; }
.b-file .sep { margin-right: 0; }
.b-file .more { position: absolute; left: 138px; top: 2px; margin: 0; }
.b-main { width: 550px; padding-left: 3px; position: relative; }
.b-main .more { position: absolute; left: 537px; top: 2px; margin: 0; }
.b-view { width: 660px; margin-left: 2px; padding-left: 1px; position: relative; }
.b-view .more { position: absolute; left: 647px; top: 2px; margin: 0; }
.sigma { font: 700 14px/16px "Liberation Serif", serif; text-align: center; }

.main { flex: none; height: 624px; display: flex; }
.side { width: 166px; margin-right: 5px; flex: none; display: flex; flex-direction: column; }
.side-head { height: 15px; display: flex; align-items: center; border: 1px solid #8a8a8a; border-bottom-color: #666; background: #f4f4f4; font-size: 12px; line-height: 13px; }
.side-head span:first-child { flex: 1; }
.pin { width: 10px; height: 12px; margin-right: 8px; }
.pinx { width: 16px; text-align: center; font-size: 13px; }
.navbtn { height: 23px; flex: none; font: inherit; color: #111; background: linear-gradient(#fafafa, #ececec); border: 1px solid #b8b8b8; }
.navbtn.first { height: 22px; margin-top: 2px; }
.tree-wrap { height: 517px; flex: none; border: 1px solid #8e8e8e; border-top: 2px solid #aaa; background: #fff; margin: 0 0 0 2px; width: 164px; }
.tree-tools { display: flex; gap: 7px; height: 24px; padding: 3px 0 0 4px; background: #fff; }
.tree { list-style: none; font-family: "Noto Sans CJK SC", sans-serif; padding-top: 2px; }
.tree li { height: 16px; display: flex; align-items: center; white-space: nowrap; position: relative; }
.tree .n { padding-left: 24px; gap: 4px; }
.tree .c { padding-left: 43px; gap: 4px; }
.chev { position: absolute; left: 7px; top: 4px; width: 7px; height: 7px; border-right: 2px solid #999; border-bottom: 2px solid #999; transform: rotate(-45deg); }
.chev.down { left: 8px; top: 2px; border-color: #444; transform: rotate(45deg); }
.c::before { content: ""; position: absolute; left: 31px; top: 8px; width: 11px; border-top: 1px dotted #888; }
.c.v::after { content: ""; position: absolute; left: 31px; top: 0; height: 16px; border-left: 1px dotted #888; }
.c.e::after { content: ""; position: absolute; left: 31px; top: 0; height: 8px; border-left: 1px dotted #888; }
.lb { display: block; }
.lat { font: 10px/16px "Liberation Mono", monospace; }
.f.lat { font: 10px/20px "Liberation Mono", monospace; }
.sel-in { display: flex; align-items: center; gap: 4px; background: #cfcfcf; width: 89px; height: 15px; flex: none; }
.bk { width: 14px; height: 14px; flex: none; margin-left: -3px; }
.bk2 { margin-left: 1px; }
.nw { font: 700 9px/9px "Liberation Sans", sans-serif; background: #ffe94a; color: #222; padding: 0 1px; align-self: flex-start; margin-left: -2px; margin-top: -3px; }
.nw.clip { font-size: 7px; line-height: 8px; padding: 0; margin-left: -5px; margin-top: -2px; }

.work { width: 1195px; flex: none; display: flex; flex-direction: column; }
.tb { flex: none; display: flex; }
.tb-a { height: 27px; padding-left: 1px; }
.tb-a .band { height: 25px; width: 788px; padding-left: 4px; gap: 7px; }
.b-edit .grip { margin-right: -3px; }
.tb-b { height: 28px; padding-left: 1px; }
.tb-b .band { height: 28px; }
.b-combo { width: 565px; padding-left: 2px; gap: 4px; }
.b-combo .sep { margin-left: 12px; margin-right: 0; }
.b-combo .it { margin-left: 3px; }
.b-combo .sep + .it { margin-left: 1px; }
.b-axis { margin-left: 76px; width: 420px; padding-left: 1px; }
.b-axis .grip { margin-right: -2px; }
.combo { display: flex; align-items: center; justify-content: space-between; height: 22px; background: #fff; padding-left: 2px; flex: none; position: relative; }
.combo .ar { margin-right: -3px; }
.c56 { width: 56px; }
.c68 { width: 68px; }
.over { width: 58px; }
.over .ar { margin-right: -10px; }
.tb-c { height: 29px; padding-left: 7px; gap: 1px; }
.tb-c .band { height: 29px; }
.b-draw { width: 489px; padding-left: 3px; }
.b-draw .grip { margin-right: -5px; }
.pick { width: 51px; height: 23px; padding-left: 4px; gap: 4px; }
.pick .i { width: 14px; }
.b-draw > .ar.tight { margin-left: -3px; margin-right: -2px; }
.ar.tight + .sep { margin-right: -4px; }
.blank { width: 43px; margin-left: -3px; margin-right: 11px; }
.blank .ar { position: absolute; right: -9px; top: 9px; margin: 0; }
.b-stub { width: 31px; padding-left: 3px; }

.view { position: relative; height: 512px; flex: none; background: #000; overflow: hidden; }
.scene { display: block; width: 1195px; height: 512px; }
.red line { stroke: #f00; stroke-width: 1.3; shape-rendering: crispEdges; }
.solid polygon { shape-rendering: crispEdges; }
.gridmark circle { fill: none; stroke: #0c8a0c; stroke-width: 1; }
.gridtext text { fill: #d8d8d8; font: 14px "Liberation Sans", sans-serif; text-anchor: middle; }
.axes text { font: 13px "Liberation Sans", sans-serif; }
.ax-z { fill: #0a84ff; } .ax-y { fill: #14d814; } .ax-x { fill: #e02020; }

.cpu { position: absolute; left: 939px; top: 2px; width: 118px; height: 60px; }
.cpu-ring { position: absolute; left: 4px; top: 4px; width: 52px; height: 52px; border-radius: 50%; background: #33363d; border: 2px solid #1c9ce0; box-shadow: 0 0 0 4px #26282c; color: #eee; display: flex; align-items: baseline; justify-content: center; line-height: 48px; }
.pct { font: 300 26px/48px "Open Sans", sans-serif; letter-spacing: 1px; }
.pc { font: 700 11px/48px "Open Sans", sans-serif; }
.cpu-pill { position: absolute; left: 42px; top: 9px; width: 74px; height: 42px; background: #26282c; border-radius: 9px; padding: 4px 0 0 21px; display: flex; flex-direction: column; line-height: 17px; color: #9c9c9c; white-space: nowrap; }
.temp { color: #4fc85a; display: flex; align-items: center; gap: 6px; margin-left: 4px; }
.leaf { width: 10px; height: 14px; }

.snapbar { height: 28px; flex: none; display: flex; gap: 5px; padding: 3px 0 0 3px; }
.snapbar .band { height: 24px; gap: 4px; }
.b-snap1 { width: 207px; padding-left: 2px; }
.b-snap1 .grip { margin-right: 0; }
.b-snap2 { width: 260px; padding-left: 1px; }
.b-snap2 .grip { margin-right: 2px; }
.w74 { width: 74px; height: 23px; padding-left: 2px; gap: 3px; }
.w51 { width: 51px; height: 23px; padding-left: 3px; gap: 3px; }
.join { margin-left: -4px; }
.push { margin-left: 2px; }

.status { height: 23px; flex: none; display: flex; gap: 2px; padding-top: 3px; }
.f { height: 20px; line-height: 20px; padding-left: 1px; background: linear-gradient(#fff, #f2f2f2); border: 1px solid #dcdcdc; border-bottom: 0; white-space: nowrap; overflow: hidden; font-family: "Noto Sans CJK SC", sans-serif; }
.f1 { width: 148px; } .f2 { width: 78px; } .f3 { width: 98px; } .f4 { width: 48px; } .f5 { width: 908px; } .f6 { width: 76px; }

.taskbar { flex: none; height: 40px; background: linear-gradient(90deg, #0c1a20, #0a1f26 50%, #0c1a22); display: flex; align-items: center; color: #eee; position: relative; }
.tw { width: 16px; height: 16px; margin-left: 16px; }
.cortana { width: 15px; height: 15px; margin-left: 32px; border: 2px solid #eee; border-radius: 50%; flex: none; }
.search { width: 150px; height: 30px; margin-left: 17px; background: #3f4144; display: flex; align-items: center; color: #8d8d8d; flex: none; position: relative; }
.ts { width: 20px; height: 20px; margin: 0 5px 0 1px; }
.tm { width: 18px; height: 18px; position: absolute; left: 125px; top: 6px; }
.tk { width: 24px; height: 24px; display: block; }
.swirl { margin-left: 10px; width: 20px; height: 20px; }
.tapp { width: 40px; height: 40px; margin-left: 9.2px; display: flex; align-items: center; justify-content: center; flex: none; position: relative; }
.swirl + .tapp { margin-left: 25px; }
.tapp.act::after { content: ""; position: absolute; left: 0; right: 0; bottom: 0; height: 2px; background: #7fb6e8; }
.tray { position: absolute; left: 964px; top: 0; height: 40px; width: 402px; }
.tray > * { position: absolute; }
.desk { left: 0; top: 11px; }
.tmore { left: 31px; top: 1px; font: 12px/16px "DejaVu Sans", sans-serif; }
.two-l { display: flex; flex-direction: column; align-items: center; top: 2px; line-height: 18px; }
.t-cpu { left: 60px; width: 48px; }
.t-clock { left: 282px; width: 60px; }
.caret { left: 129px; top: 15px; width: 10px; height: 10px; border-left: 1.5px solid #eee; border-top: 1.5px solid #eee; transform: rotate(45deg); }
.tray .i:nth-of-type(1) { left: 150px; top: 12px; }
.tray .i:nth-of-type(2) { left: 175px; top: 12px; }
.tray .i:nth-of-type(3) { left: 198px; top: 12px; }
.ime { left: 223px; top: 11px; }
.tray .i:nth-of-type(4) { left: 250px; top: 11px; }
.tn { left: 360px; top: 11px; width: 18px; height: 18px; }
```
